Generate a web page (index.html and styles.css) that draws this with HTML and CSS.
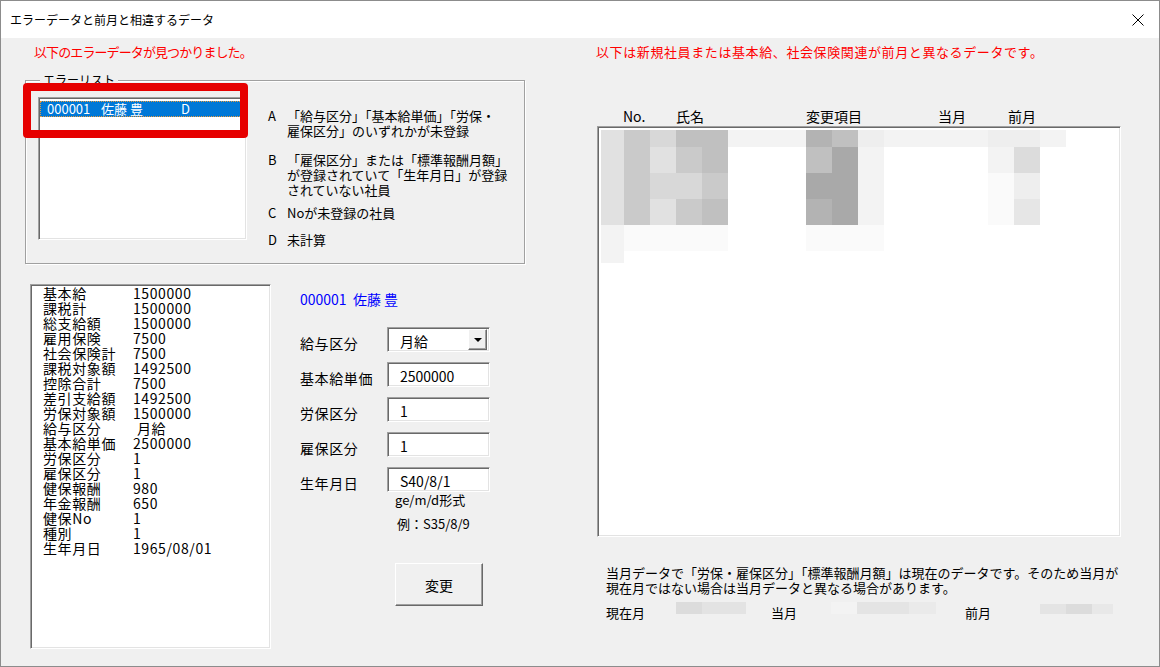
FILE: index.html
```html
<!DOCTYPE html>
<html lang="ja">
<head>
  <meta charset="utf-8">
  <title>エラーデータと前月と相違するデータ</title>
  <link rel="stylesheet" href="styles.css">
</head>
<body>
<div class="window">
  <div class="titlebar">
    <span class="title">エラーデータと前月と相違するデータ</span>
    <svg class="close" width="12" height="12" viewBox="0 0 12 12"><path d="M0.5 0.5L11.5 11.5M11.5 0.5L0.5 11.5" stroke="#000" stroke-width="1" fill="none"/></svg>
  </div>

  <div class="client">
    <div class="left">
      <p class="alert alert-left">以下のエラーデータが見つかりました。</p>

      <div class="group">
        <span class="legend">エラーリスト</span>
        <div class="listbox errlist">
          <div class="selected"><span class="sel-no">000001</span><span class="sel-name">佐藤 豊</span><span>D</span></div>
        </div>
        <div class="codes">
          <div class="code"><span class="key">A</span><span>「給与区分」「基本給単価」「労保・<br>雇保区分」のいずれかが未登録</span></div>
          <div class="code code-b"><span class="key">B</span><span>「雇保区分」または「標準報酬月額」<br>が登録されていて「生年月日」が登録<br>されていない社員</span></div>
          <div class="code code-c"><span class="key">C</span><span>Noが未登録の社員</span></div>
          <div class="code code-d"><span class="key">D</span><span>未計算</span></div>
        </div>
        <div class="mark"></div>
      </div>

      <div class="lower">
        <div class="listbox details">
          <span>基本給</span><span>1500000</span>
          <span>課税計</span><span>1500000</span>
          <span>総支給額</span><span>1500000</span>
          <span>雇用保険</span><span>7500</span>
          <span>社会保険計</span><span>7500</span>
          <span>課税対象額</span><span>1492500</span>
          <span>控除合計</span><span>7500</span>
          <span>差引支給額</span><span>1492500</span>
          <span>労保対象額</span><span>1500000</span>
          <span>給与区分</span><span class="indent">月給</span>
          <span>基本給単価</span><span>2500000</span>
          <span>労保区分</span><span>1</span>
          <span>雇保区分</span><span>1</span>
          <span>健保報酬</span><span>980</span>
          <span>年金報酬</span><span>650</span>
          <span>健保No</span><span>1</span>
          <span>種別</span><span>1</span>
          <span>生年月日</span><span>1965/08/01</span>
        </div>

        <div class="form">
          <div class="name">000001&nbsp; 佐藤 豊</div>
          <div class="fields">
            <span class="field-label">給与区分</span>
            <div class="listbox input combo">月給<span class="drop"><span class="arrow"></span></span></div>
            <span class="field-label">基本給単価</span>
            <div class="listbox input">2500000</div>
            <span class="field-label">労保区分</span>
            <div class="listbox input">1</div>
            <span class="field-label">雇保区分</span>
            <div class="listbox input">1</div>
            <span class="field-label">生年月日</span>
            <div class="listbox input">S40/8/1</div>
          </div>
          <div class="hint">ge/m/d形式</div>
          <div class="hint hint-example">例：S35/8/9</div>
          <button class="btn">変更</button>
        </div>
      </div>
    </div>

    <div class="right">
      <p class="alert alert-right">以下は新規社員または基本給、社会保険関連が前月と異なるデータです。</p>
      <div class="cols">
        <span>No.</span><span>氏名</span><span>変更項目</span><span>当月</span><span>前月</span>
      </div>
      <div class="listbox listview">
        <div class="blur" id="blur"></div>
      </div>
      <p class="note">当月データで「労保・雇保区分」「標準報酬月額」は現在のデータです。そのため当月が<br>現在月ではない場合は当月データと異なる場合があります。</p>
      <div class="current">
        <span class="cur-label">現在月</span><span class="mask mask-now"></span>
        <span class="cur-label cur-this">当月</span><span class="mask mask-this"></span>
        <span class="cur-label cur-prev">前月</span><span class="mask mask-prev"></span>
      </div>
    </div>
  </div>
</div>

<script>
  // pixelated (masked) rows of the list view, one letter per cell
  var rows = [
    "acbddsssfdessssees",
    "acacd...dgs....sh.",
    "acbbc...ggs....we.",
    "acacd...fgs....wi.",
    "swwww...www.......",
    "s"
  ];
  var blur = document.getElementById('blur');
  rows.forEach(function (row) {
    for (var i = 0; i < row.length; i++) {
      var cell = document.createElement('div');
      if (row[i] != '.') cell.className = 'px-' + row[i];
      blur.appendChild(cell);
    }
  });
</script>
</body>
</html>
```

FILE: styles.css
```css
body {
  margin: 0;
  background: #fff;
  font-family: "Noto Sans CJK JP", "Liberation Sans", sans-serif;
  color: #000;
}

.window {
  width: 1160px;
  height: 667px;
  box-sizing: border-box;
  border: 1px solid #8c8c8c;
  background: #f0f0f0;
  display: flex;
  flex-direction: column;
}

.titlebar {
  height: 37px;
  flex-shrink: 0;
  background: #fff;
  display: flex;
  align-items: center;
  justify-content: space-between;
  padding: 1px 15px 0 9px;
  box-sizing: border-box;
}

.title {
  font-size: 12px;
  line-height: 16px;
}

.close {
  display: block;
}

.client {
  display: flex;
  flex: 1;
}

.left {
  width: 595px;
  flex-shrink: 0;
}

.right {
  flex: 1;
}

.alert {
  margin: 0;
  padding-top: 6px;
  color: #f00;
  font-size: 13px;
  line-height: 16px;
  white-space: nowrap;
}

.alert-left {
  padding-left: 33px;
  letter-spacing: -0.9px;
}

.alert-right {
  letter-spacing: 0.6px;
}

/* group box */
.group {
  position: relative;
  margin: 20px 0 0 24px;
  width: 500px;
  height: 184px;
  box-sizing: border-box;
  border: 1px solid #a0a0a0;
  box-shadow: inset 1px 1px 0 #fff, 1px 1px 0 #fff;
  display: flex;
  align-items: flex-start;
}

.legend {
  position: absolute;
  top: -9px;
  left: 14px;
  padding: 0 3px;
  background: #f0f0f0;
  font-size: 12px;
  line-height: 16px;
}

.listbox {
  background: #fff;
  box-sizing: border-box;
  border: 1px solid;
  border-color: #a0a0a0 #fff #fff #a0a0a0;
  box-shadow: inset 1px 1px 0 #696969, inset -1px -1px 0 #e3e3e3;
}

.errlist {
  margin: 16px 0 0 12px;
  width: 209px;
  height: 143px;
  padding: 3px 2px 0 1px;
  flex-shrink: 0;
}

.selected {
  display: flex;
  height: 16px;
  padding-left: 7px;
  background: #0078d7;
  color: #fff;
  font-size: 13px;
  line-height: 16px;
  outline: 1px dotted #e89a3c;
  outline-offset: -1px;
}

.sel-no {
  width: 54px;
}

.sel-name {
  width: 80px;
}

.codes {
  margin: 27px 0 0 21px;
  font-size: 13px;
  line-height: 15px;
  white-space: nowrap;
}

.code {
  display: flex;
}

.key {
  width: 19px;
}

.code-b {
  margin-top: 14px;
}

.code-c {
  margin-top: 8px;
}

.code-d {
  margin-top: 12px;
}

.mark {
  position: absolute;
  left: -3px;
  top: 2px;
  width: 225px;
  height: 55px;
  box-sizing: border-box;
  border: 8px solid #e60000;
  border-radius: 4px;
}

/* lower left area */
.lower {
  display: flex;
  margin-top: 20px;
}

.details {
  margin-left: 29px;
  width: 241px;
  height: 365px;
  padding: 1px 0 0 12px;
  display: grid;
  grid-template-columns: 90px auto;
  align-content: start;
  font-size: 14px;
  line-height: 15px;
  letter-spacing: 0.6px;
  flex-shrink: 0;
}

.indent {
  padding-left: 4px;
}

.form {
  margin-left: 29px;
}

.name {
  margin-top: 7px;
  color: #00f;
  font-size: 14px;
  line-height: 16px;
}

.fields {
  margin-top: 20px;
  display: grid;
  grid-template-columns: 87px 103px;
  row-gap: 10px;
}

.field-label {
  padding-top: 8px;
  font-size: 14px;
  line-height: 16px;
  letter-spacing: 0.6px;
}

.input {
  position: relative;
  height: 25px;
  padding: 5px 0 0 12px;
  font-size: 14px;
  line-height: 16px;
}

.drop {
  position: absolute;
  right: 2px;
  top: 1px;
  width: 19px;
  height: 21px;
  box-sizing: border-box;
  background: #f0f0f0;
  border: 1px solid;
  border-color: #fff #696969 #696969 #fff;
  box-shadow: inset -1px -1px 0 #a0a0a0;
  display: flex;
  align-items: center;
  justify-content: center;
}

.arrow {
  width: 0;
  height: 0;
  border-left: 4px solid transparent;
  border-right: 4px solid transparent;
  border-top: 4px solid #000;
}

.hint {
  margin-left: 95px;
  font-size: 13px;
  line-height: 16px;
}

.hint-example {
  margin: 8px 0 0 97px;
}

.btn {
  display: block;
  margin: 31px 0 0 95px;
  width: 88px;
  height: 43px;
  padding: 0;
  background: #f0f0f0;
  border: 1px solid;
  border-color: #fff #696969 #696969 #fff;
  box-shadow: inset -1px -1px 0 #a0a0a0;
  font-family: inherit;
  font-size: 14px;
  color: #000;
}

/* right side */
.cols {
  margin-top: 48px;
  padding-left: 27px;
  display: grid;
  grid-template-columns: 53px 130px 132px 70px auto;
  font-size: 14px;
  line-height: 16px;
}

.listview {
  margin: 2px 0 0 1px;
  width: 524px;
  height: 411px;
  padding: 3px 0 0 3px;
}

.blur {
  display: grid;
  grid-template-columns: 23px repeat(17, 26px);
  grid-template-rows: 17px repeat(4, 26px) 12px;
}

.px-a { background: #e1e1e1; }
.px-b { background: #d8d8d8; }
.px-c { background: #cacaca; }
.px-d { background: #c0c0c0; }
.px-e { background: #eeeeee; }
.px-f { background: #b3b3b3; }
.px-g { background: #a9a9a9; }
.px-h { background: #dcdcdc; }
.px-i { background: #e6e6e6; }
.px-s { background: #f3f3f3; }
.px-w { background: #fafafa; }

.note {
  margin: 28px 0 0 10px;
  font-size: 13px;
  line-height: 15px;
  white-space: nowrap;
}

.current {
  display: flex;
  align-items: flex-start;
  margin: 10px 0 0 10px;
  font-size: 13px;
  line-height: 16px;
}

.cur-label {
  width: 70px;
}

.cur-this {
  width: 60px;
}

.cur-prev {
  width: 44px;
}

.mask {
  height: 12px;
  margin-top: -3px;
}

.mask-now {
  width: 70px;
  margin-right: 25px;
  background: linear-gradient(to right, #dcdcdc 0 26px, #e3e3e3 26px);
}

.mask-this {
  width: 105px;
  margin-right: 29px;
  background: linear-gradient(to right, #f3f3f3 0 26px, #e4e4e4 26px 78px, #eaeaea 78px);
}

.mask-prev {
  width: 104px;
  margin-top: -1px;
  height: 10px;
  background: linear-gradient(to right, #f0f0f0 0 31px, #e4e4e4 31px 57px, #dcdcdc 57px 83px, #e8e8e8 83px);
}
```
